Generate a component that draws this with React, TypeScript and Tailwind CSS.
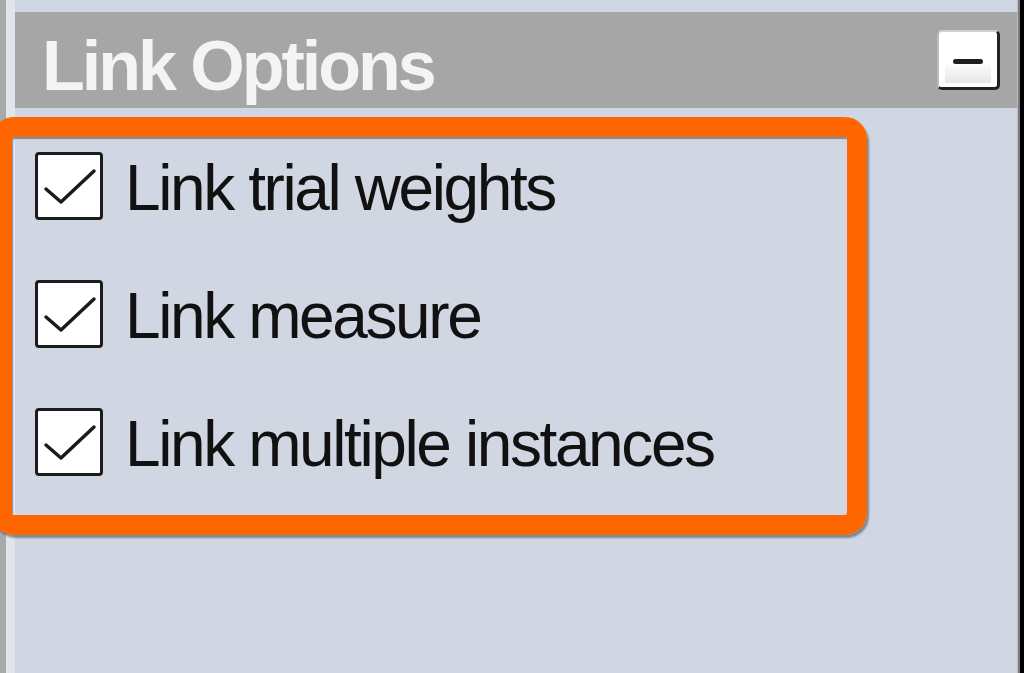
import React from "react";

function Check() {
  return (
    <div className="w-[68px] h-[68px] shrink-0 bg-white border-[3px] border-[#1c1c1c] rounded-[4px] flex items-center justify-center">
      <svg width="62" height="62" viewBox="0 0 62 62">
        <path d="M8 34 L23 47 L56 16" fill="none" stroke="#1a1a1a" strokeWidth="3.5" strokeLinejoin="round" strokeLinecap="round" />
      </svg>
    </div>
  );
}

export default function App() {
  const rows = ["Link trial weights", "Link measure", "Link multiple instances"];
  return (
    <div
      className="relative w-[1024px] h-[673px] overflow-hidden bg-[#d1d7e2] flex"
      style={{ fontFamily: '"Liberation Sans", Arial, sans-serif' }}
    >
      <div className="w-[15px] shrink-0 flex">
        <div className="w-[6px] bg-[#a9a9a9]" />
        <div className="w-[9px] bg-[#e1e4ea]" />
      </div>
      <div className="flex-1 flex flex-col">
        <div className="h-[12px]" />
        <div className="h-[96px] bg-[#a6a6a6] flex items-start justify-between pl-[27px] pr-[17px]">
          <span className="mt-[19px] text-[70px] leading-[70px] font-bold text-[#f4f4f4] tracking-[-3px]">
            Link Options
          </span>
          <div className="mt-[18px] w-[63px] h-[60px] rounded-[5px] bg-white border-t-2 border-l-2 border-b-[3px] border-r-[3px] border-t-[#cfcfcf] border-l-[#bcbcbc] border-b-[#222] border-r-[#222] flex items-center justify-center">
            <div className="w-[46px] h-[42px] mt-[4px] bg-gradient-to-b from-white via-white to-[#e6e6e6] flex items-center justify-center">
              <div className="w-[30px] h-[5px] bg-[#1e1e1e] rounded-full" />
            </div>
          </div>
        </div>
        <div className="flex flex-col pt-[44px] pl-[20px] gap-[60px]">
          {rows.map((r) => (
            <div key={r} className="h-[68px] flex items-center gap-[22px]">
              <Check />
              <span className="text-[64px] leading-[68px] pt-[3px] text-[#111] tracking-[-2.4px]">{r}</span>
            </div>
          ))}
        </div>
      </div>
      <div className="w-[7px] shrink-0 flex">
        <div className="w-[1px] bg-[#b4b8c0]" />
        <div className="w-[2px] bg-[#7c7c7c]" />
        <div className="w-[4px] bg-black" />
      </div>
      <div className="pointer-events-none absolute left-[-8px] top-[117px] w-[875px] h-[418px] border-[20px] border-[#ff6600] rounded-[22px] shadow-[inset_1px_2px_1px_rgba(60,75,95,0.55),2px_3px_2px_rgba(40,55,75,0.5)]" />
    </div>
  );
}
